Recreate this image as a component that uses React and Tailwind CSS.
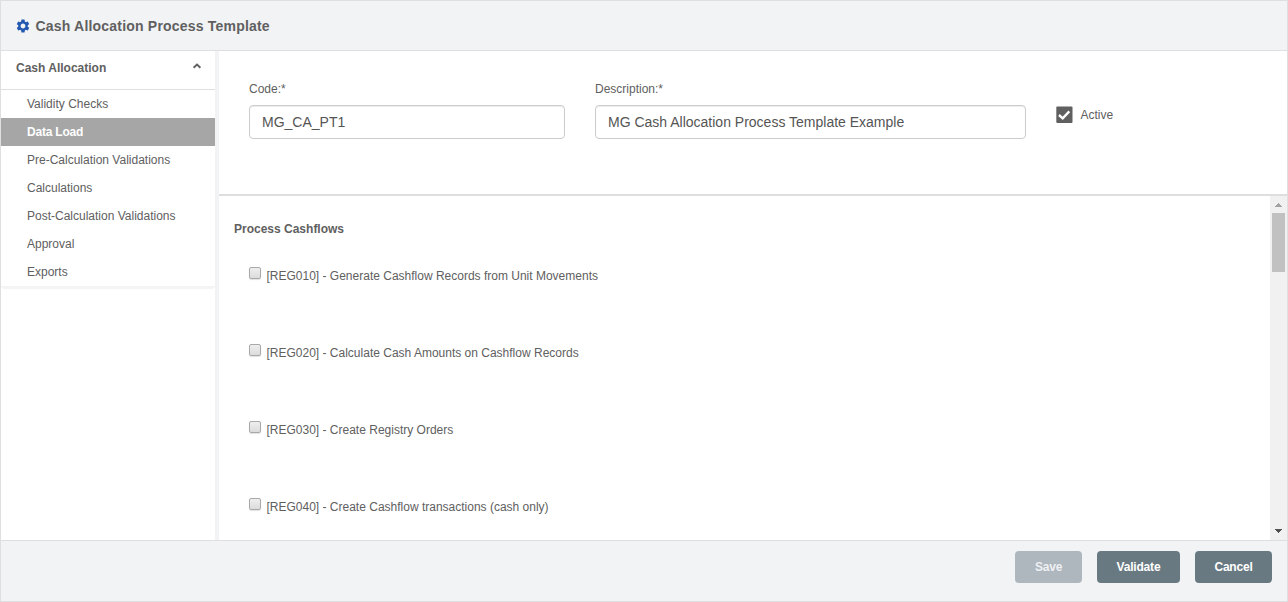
import { MdSettings } from "react-icons/md";

const steps = [
  "Validity Checks",
  "Data Load",
  "Pre-Calculation Validations",
  "Calculations",
  "Post-Calculation Validations",
  "Approval",
  "Exports",
];

const rules = [
  "[REG010] - Generate Cashflow Records from Unit Movements",
  "[REG020] - Calculate Cash Amounts on Cashflow Records",
  "[REG030] - Create Registry Orders",
  "[REG040] - Create Cashflow transactions (cash only)",
];

function Header() {
  return (
    <header className="flex h-[50px] shrink-0 items-center border-b border-[#dedfe0] bg-[#f2f3f5] pl-[14px]">
      <MdSettings className="size-4 text-[#2358b0]" />
      <h1 className="ml-[4.5px] text-[14px] leading-5 font-bold tracking-[0.2px]">Cash Allocation Process Template</h1>
    </header>
  );
}

function Sidebar() {
  return (
    <nav className="w-[214px] shrink-0">
      <div className="flex h-[39px] items-start justify-between border-b border-[#dedfe0] pt-2 pr-[13px] pl-[15px]">
        <span className="leading-[18px] font-bold">Cash Allocation</span>
        <svg className="mt-[3px]" width="10" height="8" viewBox="0 0 10 8" fill="none" stroke="#606060" strokeWidth="1.9">
          <path d="M1.6 5.8 L5 2.6 L8.4 5.8" />
        </svg>
      </div>
      <ul className="rounded-b-[4px] border-b-[3px] border-[#f4f4f5]">
        {steps.map((s) => (
          <li
            key={s}
            className={
              s === "Data Load"
                ? "h-7 bg-[#a6a6a6] pl-[26px] leading-7 font-bold tracking-[-0.2px] text-white"
                : "h-7 pl-[26px] leading-7"
            }
          >
            {s}
          </li>
        ))}
      </ul>
    </nav>
  );
}

function Field({ label, value, width }) {
  return (
    <label className={"block " + width}>
      <span className="block leading-[18px]">{label}</span>
      <input
        readOnly
        value={value}
        className="mt-[7px] block h-[34px] w-full rounded-[4px] border border-[#cccccc] bg-white px-3 text-[14px] text-[#555555] shadow-[inset_0_1px_1px_rgba(0,0,0,0.075)] outline-none"
      />
    </label>
  );
}

function Details() {
  return (
    <section className="flex h-[145px] shrink-0 items-start border-b-2 border-[#dedede] pt-[29px] pl-[30px]">
      <Field label="Code:*" value="MG_CA_PT1" width="w-[316px]" />
      <div className="w-[30px]" />
      <Field label="Description:*" value="MG Cash Allocation Process Template Example" width="w-[431px]" />
      <div className="mt-[26px] ml-[30px] flex items-start">
        <svg width="17" height="18" viewBox="0 0 17 18">
          <rect x="0.3" y="0.6" width="16.2" height="16.4" rx="1" fill="#606060" />
          <path d="M3 9 L6.7 12.3 L13.3 5.4" fill="none" stroke="#fff" strokeWidth="2.4" />
        </svg>
        <span className="ml-[7.5px] leading-[18px]">Active</span>
      </div>
    </section>
  );
}

function Scrollbar() {
  return (
    <div className="flex w-[17px] shrink-0 flex-col items-center bg-[#f1f1f1]">
      <div className="flex h-[17px] items-start pt-[7px]">
        <svg width="7" height="4" viewBox="0 0 7 4" shapeRendering="crispEdges">
          <path d="M3 0h1v1h1v1h1v1h1v1H0V3h1V2h1V1h1z" fill="#a3a3a3" />
        </svg>
      </div>
      <div className="h-[59px] w-[13px] bg-[#c1c1c1]" />
      <div className="flex-1" />
      <div className="flex h-[17px] items-start pt-[6px]">
        <svg width="7" height="4" viewBox="0 0 7 4" shapeRendering="crispEdges">
          <path d="M0 0h7v1H6v1H5v1H4v1H3V3H2V2H1V1H0z" fill="#505050" />
        </svg>
      </div>
    </div>
  );
}

function Rules() {
  return (
    <section className="flex min-h-0 flex-1">
      <div className="flex-1 overflow-hidden pl-[15px]">
        <h2 className="mt-6 leading-[18px] font-bold">Process Cashflows</h2>
        <div className="mt-[29px] pl-[15px]">
          {rules.map((r) => (
            <label key={r} className="flex h-[77px] items-start">
              <span className="size-3 rounded-[2px] border border-[#a9a9a9] bg-linear-to-b from-[#eeeeee] to-[#dcdcdc] shadow-[0_1px_1px_rgba(0,0,0,0.12)]" />
              <span className="ml-[5.5px] leading-[18px]">{r}</span>
            </label>
          ))}
        </div>
      </div>
      <Scrollbar />
    </section>
  );
}

function Footer() {
  const base = "h-8 rounded-[4px] font-bold leading-8 tracking-[-0.2px] ";
  return (
    <footer className="flex h-[61px] shrink-0 items-start justify-end gap-[15px] border-t border-[#dedfe0] bg-[#f2f3f5] pt-[10px] pr-[15px]">
      <button className={base + "w-[67px] bg-[#aeb6be] text-[#eef0f2]"}>Save</button>
      <button className={base + "w-[83px] bg-[#697982] text-white"}>Validate</button>
      <button className={base + "w-[77px] bg-[#697982] text-white"}>Cancel</button>
    </footer>
  );
}

export default function App() {
  return (
    <div className="flex h-[602px] w-[1288px] flex-col overflow-hidden border border-[#dedfe0] bg-white font-['Liberation_Sans',Arial,sans-serif] text-[12px] text-[#606060]">
      <Header />
      <main className="flex min-h-0 flex-1">
        <Sidebar />
        <div className="w-1 shrink-0 bg-[#f2f3f5]" />
        <div className="flex min-w-0 flex-1 flex-col">
          <Details />
          <Rules />
        </div>
      </main>
      <Footer />
    </div>
  );
}
